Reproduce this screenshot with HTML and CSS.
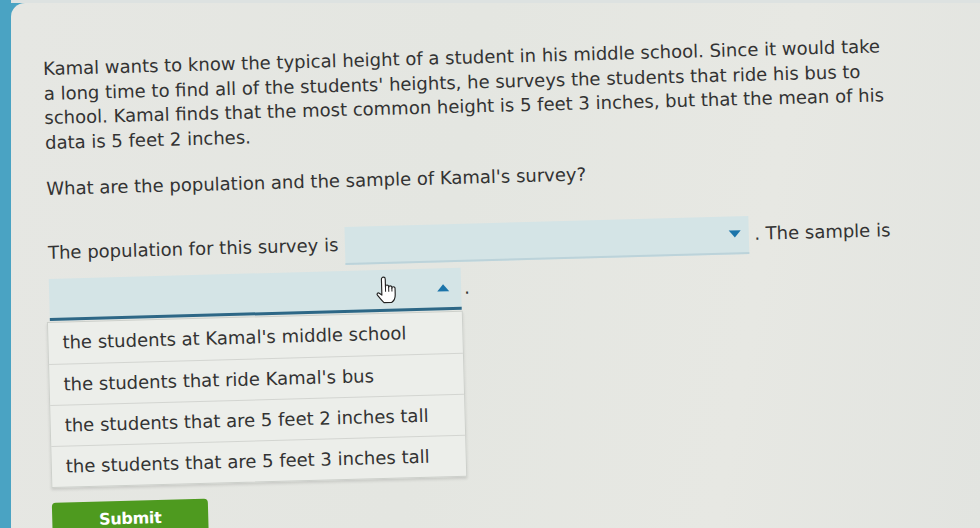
FILE: index.html
```html
<!DOCTYPE html>
<html lang="en">
<head>
    <meta charset="UTF-8">
    <meta name="viewport" content="width=device-width, initial-scale=1.0">
    <title>Population and Sample</title>
    <link rel="stylesheet" href="styles.css">
</head>
<body>
    <div class="question-card">
        <div class="question">
            <p class="prompt">
                Kamal wants to know the typical height of a student in his middle school. Since it would take<br>
                a long time to find all of the students' heights, he surveys the students that ride his bus to<br>
                school. Kamal finds that the most common height is 5 feet 3 inches, but that the mean of his<br>
                data is 5 feet 2 inches.
            </p>
            <p class="ask">What are the population and the sample of Kamal's survey?</p>

            <div class="answer-row first-row">
                <span>The population for this survey is</span>
                <span class="select select-population">
                    <span class="arrow arrow-down"></span>
                </span>
                <span>. The sample is</span>
            </div>
            <div class="answer-row second-row">
                <span class="select select-sample is-open">
                    <span class="arrow arrow-up"></span>
                    <svg class="hand-cursor" viewBox="0 0 17 22" width="22" height="28">
                        <path d="M5 10 V2.5 a1.5 1.5 0 0 1 3 0 V8.5 a1.25 1.25 0 0 1 2.5 0 V9.2 a1.25 1.25 0 0 1 2.5 0 V10 a1.25 1.25 0 0 1 2.5 0 V15 c0 3 -1.5 5 -3 6 H6.5 c-1.5 -1.5 -3.5 -4 -5 -6 c-0.8 -1 0.4 -2.3 1.5 -1.5 L5 15 Z" fill="#fff" stroke="#222" stroke-width="0.9" stroke-linejoin="round"/>
                        <path d="M8 8.5 V12.5 M10.5 9.2 V12.5 M13 10 V12.5" fill="none" stroke="#222" stroke-width="0.8"/>
                    </svg>
                </span>
                <span class="dot">.</span>
            </div>

            <ul class="select-menu">
                <li>the students at Kamal's middle school</li>
                <li>the students that ride Kamal's bus</li>
                <li>the students that are 5 feet 2 inches tall</li>
                <li>the students that are 5 feet 3 inches tall</li>
            </ul>

            <button class="submit-btn" type="button">Submit</button>
        </div>
    </div>
</body>
</html>
```

FILE: styles.css
```css
* {
    margin: 0;
    padding: 0;
    box-sizing: border-box;
}

body {
    height: 100vh;
    overflow: hidden;
    background:
        linear-gradient(to right, #4aa3c3 0 11px, #dde2e1 11px) top / 100% 3px no-repeat,
        #4aa3c3;
    font-family: "DejaVu Sans", Verdana, sans-serif;
    color: #333;
}

.question-card {
    margin: 3px 0 0 11px;
    height: calc(100vh - 3px);
    padding: 54px 0 0 35px;
    border-top-left-radius: 14px;
    background: linear-gradient(100deg, #e6e7e3 0%, #e4e6e1 45%, #e7e8e3 75%, #e2e4e0 100%);
}

/* the whole question sits a little off level */
.question {
    width: 900px;
    font-size: 18px;
    line-height: 24.5px;
    transform: rotate(-1.55deg);
    transform-origin: 0 120px;
}

.ask {
    margin-top: 22px;
}

.answer-row {
    display: flex;
    align-items: center;
}

.first-row {
    margin-top: 32px;
    height: 40px;
}

.second-row {
    height: 42px;
    margin-top: 5px;
}

.select {
    position: relative;
    display: flex;
    align-items: center;
    justify-content: flex-end;
    height: 38px;
    padding-right: 8px;
    background: #d4e4e6;
    border-bottom: 2px solid #bcd3da;
}

.select-population {
    width: 404px;
    margin: 0 5px 0 7px;
}

.select-sample {
    width: 412px;
    height: 42px;
    padding-right: 12px;
    border-bottom: 3px solid #2d6786;
}

.arrow {
    width: 0;
    height: 0;
    border-left: 6px solid transparent;
    border-right: 6px solid transparent;
}

.arrow-down {
    border-top: 7px solid #1b74aa;
}

.arrow-up {
    border-bottom: 7px solid #1b74aa;
}

.hand-cursor {
    position: absolute;
    left: 326px;
    top: 6px;
}

.dot {
    margin-left: 3px;
}

.select-menu {
    list-style: none;
    width: 416px;
    margin: 1px 0 0 -3px;
    background: #eceeea;
    border: 1px solid #cdd0cb;
    box-shadow: 0 2px 3px rgba(0, 0, 0, 0.12);
}

.select-menu li {
    height: 41px;
    line-height: 40px;
    padding-left: 14px;
    border-top: 1px solid #d3d5d1;
}

.select-menu li:first-child {
    border-top: none;
}

.submit-btn {
    display: block;
    width: 156px;
    height: 40px;
    margin: 15px 0 0 -3px;
    padding-bottom: 4px;
    border: none;
    border-radius: 4px;
    background: #4e9a1f;
    color: #fff;
    font-family: inherit;
    font-size: 16px;
    font-weight: bold;
    letter-spacing: -0.3px;
    text-align: center;
}
```
